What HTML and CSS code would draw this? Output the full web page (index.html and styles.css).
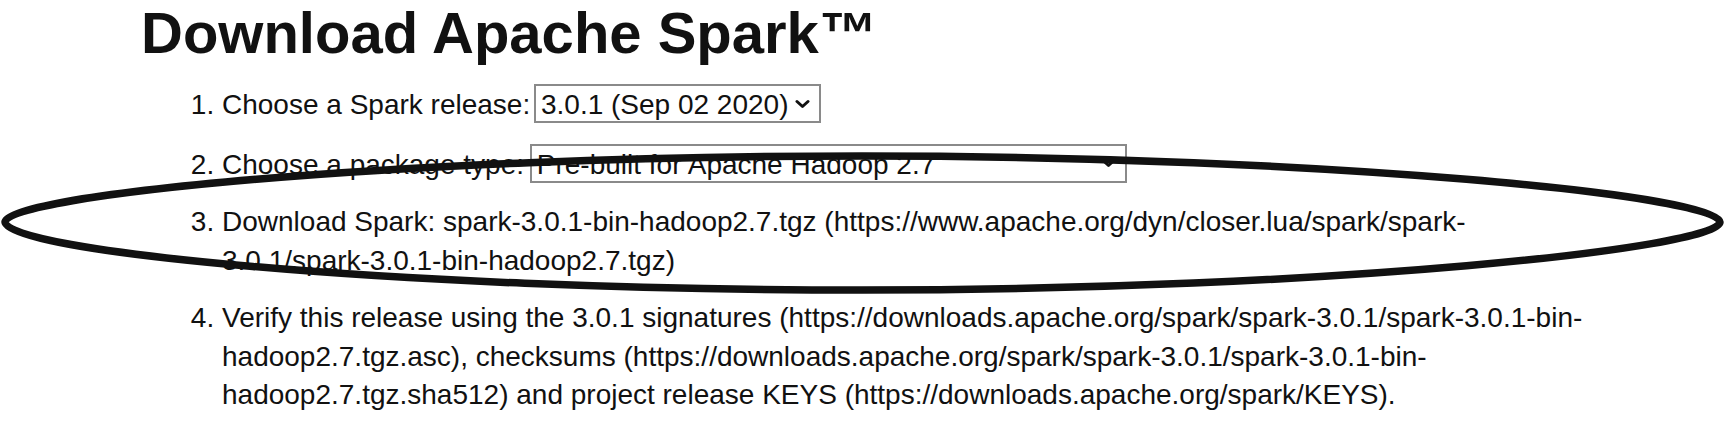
FILE: index.html
```html
<!DOCTYPE html>
<html lang="en">
<head>
<meta charset="utf-8">
<title>Download Apache Spark</title>
<link rel="stylesheet" href="styles.css">
</head>
<body>
<main class="page">
  <h1 class="title">Download Apache Spark™</h1>
  <ol class="steps">
    <li>Choose a Spark release: <span class="select"><span class="select-text">3.0.1 (Sep 02 2020)</span><svg class="chevron" width="15" height="10" viewBox="0 0 15 10"><polyline points="2,2.5 7.5,7.5 13,2.5" fill="none" stroke="#111" stroke-width="3" stroke-linecap="round" stroke-linejoin="round"/></svg></span></li>
    <li>Choose a package type: <span class="select select-wide"><span class="select-text">Pre-built for Apache Hadoop 2.7</span><svg class="chevron" width="15" height="10" viewBox="0 0 15 10"><polyline points="2,2.5 7.5,7.5 13,2.5" fill="none" stroke="#111" stroke-width="3" stroke-linecap="round" stroke-linejoin="round"/></svg></span></li>
    <li>Download Spark: spark-3.0.1-bin-hadoop2.7.tgz (https://www.apache.org/dyn/closer.lua/spark/spark-<br>3.0.1/spark-3.0.1-bin-hadoop2.7.tgz)</li>
    <li>Verify this release using the 3.0.1 signatures (https://downloads.apache.org/spark/spark-3.0.1/spark-3.0.1-bin-<br>hadoop2.7.tgz.asc), checksums (https://downloads.apache.org/spark/spark-3.0.1/spark-3.0.1-bin-<br>hadoop2.7.tgz.sha512) and project release KEYS (https://downloads.apache.org/spark/KEYS).</li>
  </ol>
  <svg class="annotation" width="1725" height="425" viewBox="0 0 1725 425" aria-hidden="true">
    <path d="M5 222 C5 196 390 156 862 156 C1330 156 1720 196 1720 222 C1720 248 1330 290 862 290 C380 290 5 250 5 222 Z" fill="none" stroke="#111" stroke-width="7.5"/>
  </svg>
</main>
</body>
</html>
```

FILE: styles.css
```css
html, body {
  margin: 0;
  padding: 0;
  background: #fff;
}

body {
  color: #111;
  font-family: "Liberation Sans", Arial, Helvetica, sans-serif;
}

.page {
  position: relative;
  width: 1725px;
  height: 425px;
  overflow: hidden;
  box-sizing: border-box;
  padding-left: 141px;
}

.title {
  margin: 0;
  font-size: 58px;
  font-weight: 700;
  line-height: 66px;
}

.steps {
  margin: 18px 0 0;
  padding-left: 81px;
  font-size: 28px;
  line-height: 38.5px;
  white-space: nowrap;
}

.steps li {
  margin-bottom: 19px;
}

.select {
  display: inline-flex;
  align-items: flex-start;
  gap: 7px;
  height: 39px;
  box-sizing: border-box;
  border: 2px solid #8a8a8a;
  padding: 3px 9px 0 5px;
  margin-left: -4px;
  background: #fff;
  vertical-align: baseline;
}

.select-wide {
  width: 597px;
  margin-left: -2px;
  justify-content: space-between;
}

.select-text {
  line-height: 32px;
}

.chevron {
  display: block;
  flex: none;
  margin-top: 9.5px;
}

.annotation {
  position: absolute;
  top: 0;
  left: 0;
  pointer-events: none;
}
```
